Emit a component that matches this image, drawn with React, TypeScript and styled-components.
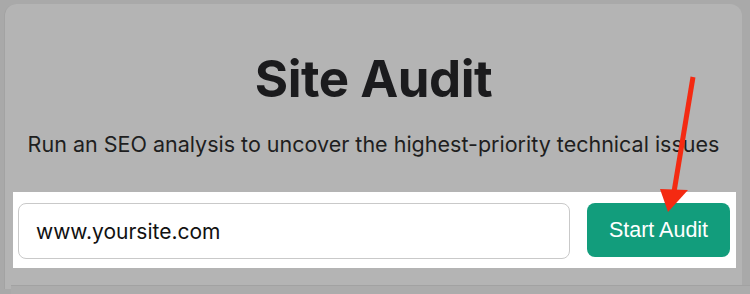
import React from "react";
import styled, { createGlobalStyle } from "styled-components";

const Global = createGlobalStyle`
  html, body { margin: 0; padding: 0; background: #a9a9a9; }
  body { font-family: Inter, "Noto Sans", sans-serif; }
`;

const Page = styled.div`
  width: 750px;
  height: 294px;
  overflow: hidden;
  padding: 4px 8px 0 4px;
  box-sizing: border-box;
`;

const Card = styled.section`
  position: relative;
  height: 285px;
  background: #b4b4b4;
  border-left: 1px solid #a3a3a3;
  border-radius: 12px 12px 0 0;
  display: flex;
  flex-direction: column;
  align-items: center;
`;

const Title = styled.h1`
  margin: 44px 0 0;
  font-family: Inter, sans-serif;
  font-weight: 700;
  font-size: 51px;
  line-height: 62px;
  letter-spacing: -0.5px;
  color: #1b1b1d;
`;

const Subtitle = styled.p`
  margin: 20px 0 0;
  font-family: Inter, sans-serif;
  font-weight: 400;
  font-size: 21.5px;
  line-height: 28px;
  color: #1e1e20;
`;

const Highlight = styled.div`
  align-self: stretch;
  margin: 34px 6px 0 8px;
  height: 76px;
  background: #ffffff;
  display: flex;
  align-items: flex-start;
  gap: 17px;
  padding: 11px 6px 0 5px;
  box-sizing: border-box;
`;

const UrlInput = styled.div`
  flex: 1;
  height: 56px;
  box-sizing: border-box;
  border: 1px solid #c9c9c9;
  border-radius: 8px;
  display: flex;
  align-items: center;
  padding-left: 17px;
  font-family: Inter, sans-serif;
  font-size: 21px;
  color: #111;
`;

const StartButton = styled.button`
  width: 143px;
  height: 54px;
  border: none;
  border-radius: 8px;
  background: #129d7c;
  color: #fff;
  font-family: "Liberation Sans", Arial, sans-serif;
  font-size: 21.5px;
  padding: 0;
  cursor: pointer;
`;

const BottomPanel = styled.div`
  position: absolute;
  left: 11px;
  right: -8px;
  top: 285px;
  height: 20px;
  background: #acacac;
  border-top: 1px solid #a2a2a2;
`;

const Arrow = styled.svg`
  position: absolute;
  left: 640px;
  top: 60px;
  width: 60px;
  height: 160px;
  pointer-events: none;
`;

export default function App() {
  return (
    <>
      <Global />
      <Page>
        <Card>
          <Title>Site Audit</Title>
          <Subtitle>
            Run an SEO analysis to uncover the highest-priority technical issues
          </Subtitle>
          <Highlight>
            <UrlInput>www.yoursite.com</UrlInput>
            <StartButton>Start Audit</StartButton>
          </Highlight>
          <Arrow viewBox="0 0 60 160">
            <line x1="48" y1="13" x2="29" y2="128" stroke="#f42a12" strokeWidth="5" strokeLinecap="butt" />
            <polygon points="15,125 43,126 23,148" fill="#f42a12" />
          </Arrow>
        </Card>
        <BottomPanel />
      </Page>
    </>
  );
}
